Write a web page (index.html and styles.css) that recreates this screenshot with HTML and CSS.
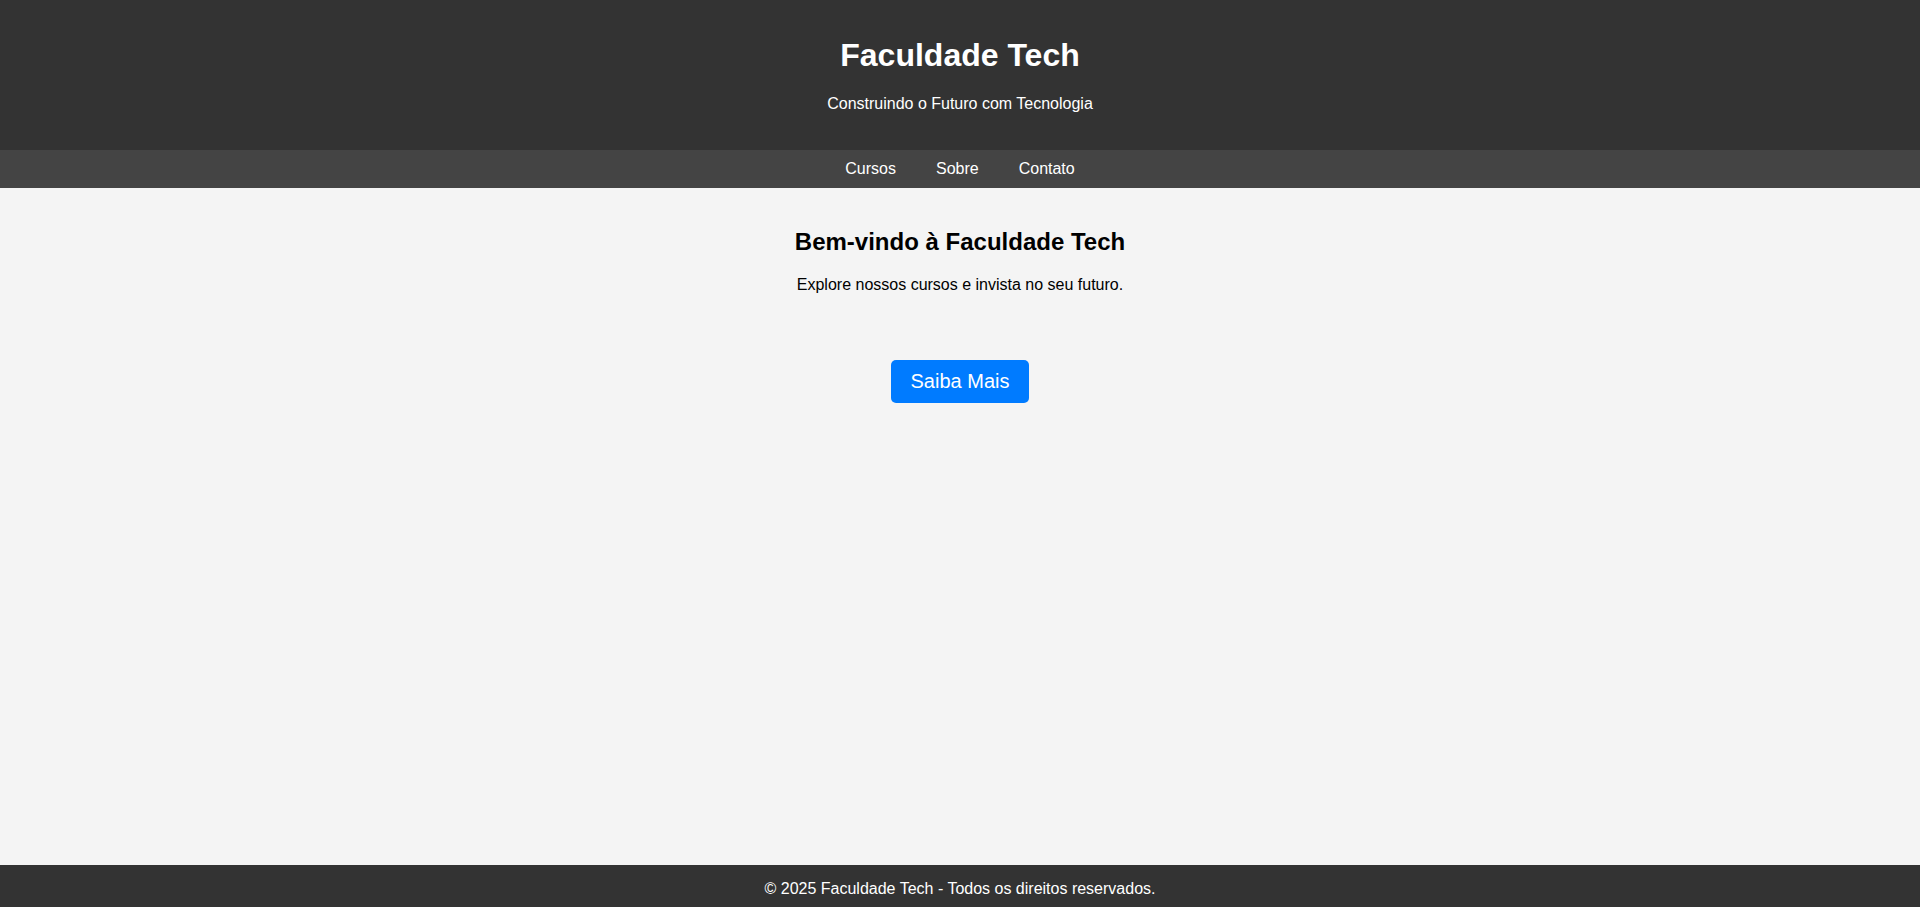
FILE: index.html
```html
<!DOCTYPE html>
<html lang="pt-BR">
<head>
<meta charset="UTF-8">
<title>Faculdade Tech</title>
<link rel="stylesheet" href="styles.css">
</head>
<body>
<div class="page">
  <header class="site-header">
    <h1 class="site-title">Faculdade Tech</h1>
    <p class="site-tagline">Construindo o Futuro com Tecnologia</p>
  </header>
  <nav class="site-nav">
    <a href="#" class="nav-link">Cursos</a>
    <a href="#" class="nav-link">Sobre</a>
    <a href="#" class="nav-link">Contato</a>
  </nav>
  <main class="content">
    <h2 class="welcome-title">Bem-vindo à Faculdade Tech</h2>
    <p class="welcome-text">Explore nossos cursos e invista no seu futuro.</p>
    <div class="cta">
      <a href="#" class="btn">Saiba Mais</a>
    </div>
  </main>
  <footer class="site-footer">
    <p class="footer-text">© 2025 Faculdade Tech - Todos os direitos reservados.</p>
  </footer>
</div>
</body>
</html>
```
FILE: styles.css
```css
* { box-sizing: border-box; }
html, body { margin: 0; padding: 0; }
body {
  font-family: "Liberation Sans", Arial, sans-serif;
  background: #f4f4f4;
  color: #000;
  font-size: 16px;
}
.page {
  min-height: 100vh;
  display: flex;
  flex-direction: column;
}
.site-header {
  background: #333;
  color: #fff;
  text-align: center;
  padding: 16px 0 0;
  height: 150px;
}
.site-title {
  font-size: 32px;
  font-weight: bold;
  margin: 21px 0;
  line-height: 37px;
}
.site-tagline {
  margin: 16px 0;
  line-height: 18.4px;
}
.site-nav {
  background: #444;
  display: flex;
  justify-content: center;
  padding: 10px 0;
  height: 38px;
}
.nav-link {
  color: #fff;
  text-decoration: none;
  margin: 0 20px;
  line-height: 18px;
}
.content {
  flex: 1;
  text-align: center;
  padding: 20px;
}
.welcome-title {
  font-size: 24px;
  margin: 20px 0;
  line-height: 27.6px;
}
.welcome-text {
  margin: 16px 0;
  line-height: 18.4px;
}
.cta {
  padding-top: 50px;
}
.btn {
  display: inline-block;
  background: #007bff;
  color: #fff;
  text-decoration: none;
  font-size: 20px;
  line-height: 23px;
  padding: 10px 20px;
  border-radius: 5px;
}
.site-footer {
  background: #333;
  color: #fff;
  text-align: center;
  padding: 15px 0 0;
  height: 42px;
  overflow: hidden;
}
.footer-text {
  margin: 0;
  line-height: 18px;
}
```
